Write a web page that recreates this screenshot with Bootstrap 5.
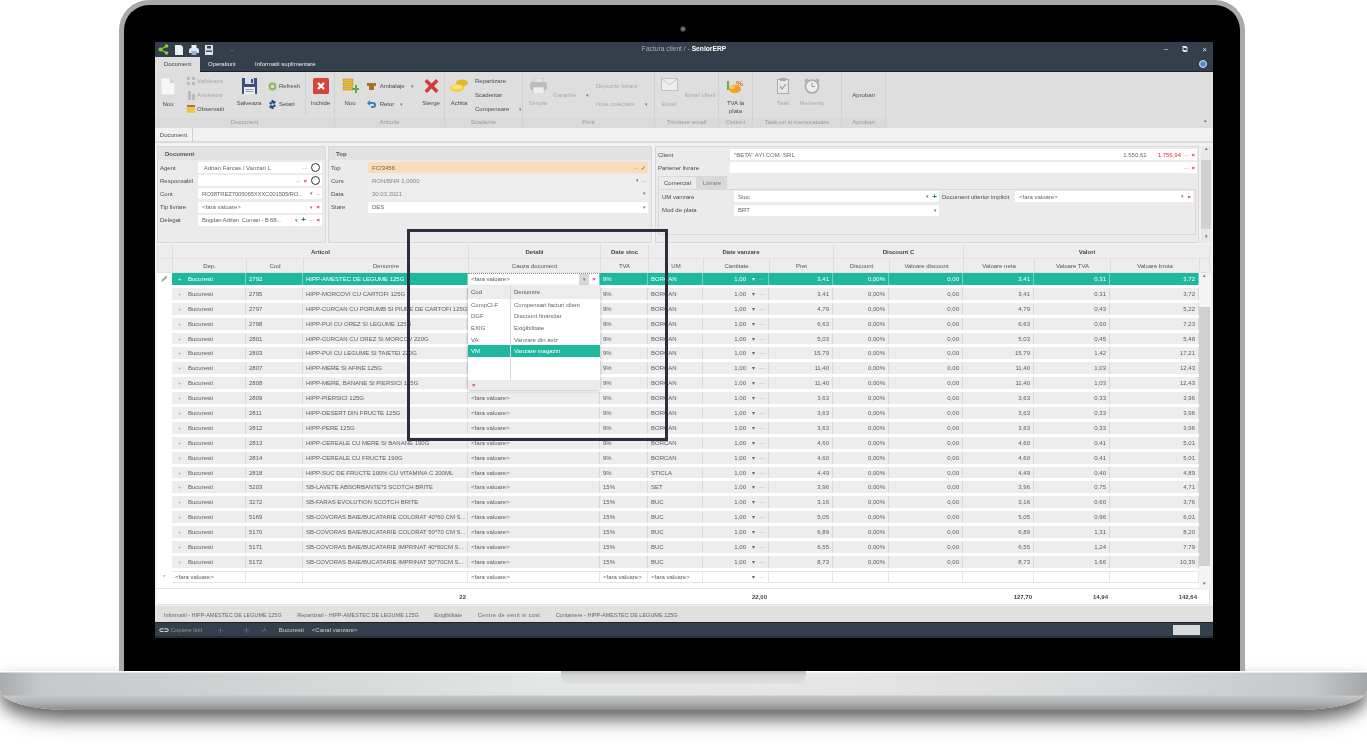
<!DOCTYPE html>
<html lang="ro">
<head>
  <meta charset="UTF-8">
  <title>SeniorERP - Factura client</title>
  <link href="https://cdn.jsdelivr.net/npm/bootstrap@5.3.0/dist/css/bootstrap.min.css" rel="stylesheet">
  <style>
    html, body { height: 753px; overflow: hidden; background: #fff; }
    body { font-family: "Liberation Sans", Arial, sans-serif; font-size: 6px; line-height: 1; color: #4a4a4a; }

    /* laptop */
    .lid { width: 1126px; height: 671px; margin-left: 119px; background: #000; border: solid #a8a9aa; border-width: 5px 5px 0; border-radius: 30px 30px 0 0; padding: 37px 26px 0 31px; position: relative; }
    .cam { width: 6px; height: 6px; border-radius: 50%; background: #6d6f70; border: 1px solid #333; position: absolute; left: 556px; top: 21px; }
    .base { height: 39px; border-radius: 0 0 70px 70px / 0 0 20px 20px; box-shadow: 0 9px 16px 0 rgba(0,0,0,.58), 0 24px 20px -6px rgba(0,0,0,.08);
      background: linear-gradient(#fff 0, #fff 1px, transparent 2px, transparent 24px, #c6c7c8 25px, #b4b5b6 31px, #8b8c8d 39px), linear-gradient(90deg, #a9abac 0, #c6c8c9 3%, #cfd0d1 15%, #e4e5e5 40%, #e6e6e6 60%, #d9dadb 80%, #c5c7c8 96%, #a5a7a8 100%); }
    .notch { width: 245px; height: 15px; border-radius: 0 0 11px 11px; background: linear-gradient(#b9babb, #d5d6d6 30%, #dfe0e0 85%, #f1f1f1); }

    /* window */
    .appwin { width: 1058px; height: 596px; background: #f1f1f1; position: relative; filter: blur(.3px); }
    .titlebar { height: 15px; background: #333f4b; color: #a5adb4; }
    .titlebar svg { display: block; }
    .titletxt { font-size: 6.7px; }
    .qa { gap: 6px; padding-left: 3px; }
    .winbtn { gap: 14px; padding-right: 6px; color: #e3e6e8; font-size: 8px; }
    .tabline { height: 15px; background: #333f4b; color: #eef0f1; border-bottom: 1px solid #1c2329; }
    .maintab { width: 45px; height: 15px; background: #dedfde; color: #444; }
    .tabtxt1 { margin-left: 8px; width: 47px; }
    .helpdot { width: 8px; height: 8px; border-radius: 50%; background: #4d8fd0; border: 1px solid #d5e4f2; margin-right: 6px; }

    /* ribbon */
    .ribbon { height: 56px; background: #dddedd; }
    .rgroup { border-right: 1px solid #d0d1d0; flex: none; }
    .rbody { height: 46px; }
    .rlabel { height: 10px; color: #999; text-align: center; line-height: 8px; background: #d9dad9; }
    .rbig { padding-top: 6px; flex: none; text-align: center; }
    .rbig svg { display: block; margin: 0 auto 6px; }
    .rline2 { padding-top: 2px; }
    .rcol { flex: none; justify-content: center; }
    .rcol > div { height: 14px; gap: 2px; white-space: nowrap; }
    .rcol.spaced { gap: 4px; }
    .off { color: #a9a9a9; }
    .rsep { width: 1px; height: 44px; background: #cfd0cf; flex: none; }
    .w26 { width: 26px; } .w28 { width: 28px; } .w29 { width: 29px; } .w30 { width: 30px; } .w34 { width: 34px; } .w37 { width: 37px; }
    .w43 { width: 43px; } .w48 { width: 48px; } .w50 { width: 50px; } .w57 { width: 57px; }
    .g180 { width: 180px; } .g110 { width: 110px; } .g78 { width: 78px; } .g132 { width: 132px; } .g64 { width: 64px; } .g34 { width: 34px; } .g89 { width: 89px; } .g44 { width: 44px; }
    .gapl6 { margin-left: 6px; } .gapl5 { margin-left: 5px; } .gapl2 { margin-left: 2px; } .gapl15 { margin-left: 15px; }
    .upcaret { margin-left: auto; margin-right: 6px; margin-top: 46px; color: #777; font-size: 5px; }

    /* document strip */
    .docstrip { height: 15px; background: #f1f1f1; border-bottom: 2px solid #dcdcdc; }
    .doctab { width: 38px; height: 14px; border-right: 1px solid #cfcfcf; }

    /* header panels */
    .panels { height: 97px; margin: 3px 3px 0 2px; gap: 2px; }
    .hpanel { background: #ebebeb; border: 1px solid #d8d8d8; flex: none; }
    .pdoc { width: 169px; } .ptop { width: 324px; margin-right: 1px; } .pcli { width: 544px; }
    .phead { height: 13px; background: #e2e2e2; font-weight: bold; padding-left: 7px; color: #555; font-size: 6px; }
    .frow { height: 13.2px; padding: 0 3px 0 2px; }
    .flabel { flex: none; }
    .flabel-d { width: 38px; } .flabel-t { width: 37px; } .flabel-c { width: 72px; }
    .fld { height: 11px; background: #fff; flex: 1 1 0; min-width: 0; padding: 0 2px 0 4px; gap: 3px; color: #666; }
    .fld .val { flex: 1 1 0; min-width: 0; white-space: nowrap; overflow: hidden; }
    .fld .tight { letter-spacing: -.2px; }
    .f-orange { background: #fbddb9; color: #6d5b46; }
    .f-off { background: #ededed; color: #888; }
    .rx { color: #c9284a; font-weight: bold; }
    .gplus { color: #1f8a3b; font-weight: bold; font-size: 8px; }
    .dots { color: #777; letter-spacing: -.5px; }
    .caret { color: #777; font-size: 5px; }
    .chat { width: 9px; height: 9px; border: 1px solid #333; border-radius: 50%; background: #fff; flex: none; margin-left: 1px; }
    .fcontrols { padding-top: 1px; }
    .clitop { padding-top: 1px; }
    .clitop .frow { padding-right: 1px; }
    .clitabs { margin: 2px 2px 0 2px; height: 13px; }
    .ctab { height: 13px; width: 39px; background: #ebebeb; border: 1px solid #d8d8d8; border-bottom: 0; }
    .ctab2 { width: 30px; background: #d9d9d9; color: #777; }
    .cinner { margin: 0 2px; height: 46px; border: 1px solid #d8d8d8; }
    .lab-um { width: 73px; padding-left: 1px; }
    .lab-doc { width: 76px; padding-left: 3px; flex: none; }
    .fum { flex: 0 0 205px; }
    .fdoc { flex: 0 0 178px; margin-left: 0; }
    .vscroll { width: 10px; flex: none; background: #e8e8e8; color: #666; }
    .vthumb { background: #cfd0d0; flex: 1 1 0; margin: 5px 0; }
    .vend { height: 9px; font-size: 5px; }

    /* grid */
    .gridwrap { margin: 2px 3px 0 2px; height: 360px; background: #fff; border: 1px solid #e2e2e2; border-width: 0 1px 1px 0; }
    .glin { display: grid; grid-template-columns: 15px 74px 57px 165px 132px 48px 55px 66px 64px 56px 74px 71px 76px 89px 11px; }
    .ghead { height: 14px; background: #ededed; border-bottom: 1px solid #e2e2e2; }
    .ghead > div { display: flex; align-items: center; justify-content: center; border-left: 1px solid #dcdcdc; color: #555; }
    .ghead.top > div { font-weight: bold; color: #444; }
    .s3 { grid-column: span 3; } .s2 { grid-column: span 2; } .s4 { grid-column: span 4; }
    .grow { height: 14.9px; border-bottom: 3px solid #fff; background: #ededed; }
    .grow > div { display: flex; align-items: center; padding: 0 3px; border-right: 1px solid #d9d9d9; white-space: nowrap; overflow: hidden; color: #5c5c5c; min-width: 0; }
    .grow > .ci { background: #fff; border-right: 0; justify-content: center; color: #888; }
    .grow > .cs { background: #fff; border-right: 0; }
    .grow > .ce { justify-content: flex-end; }
    .grow .plus { color: #aaa; width: 13px; flex: none; padding-left: 3px; }
    .grow .ctrl { margin-left: 6px; gap: 4px; color: #666; }
    .grow.sel { background: #1eb89f; }
    .grow.sel > div { color: #fff; border-right-color: #6fd3c2; }
    .grow.sel > .ci, .grow.sel > .cs { color: #888; }
    .grow.sel .plus, .grow.sel .ctrl { color: #d8f3ee; }
    .grow.sel > .cedit { background: #fff; color: #555; border-top: 1px dotted #888; padding-right: 0; }
    .cbtn { width: 10px; height: 12px; background: #d8d8d8; color: #777; flex: none; font-size: 5px; }
    .cx { width: 10px; flex: none; text-align: center; }
    .grow.newl { background: #fff; }
    .grow.newl > div { border: 1px solid #e6e6e6; border-width: 1px 1px 1px 0; }
    .grow.newl > .ci, .grow.newl > .cs { border: 0; }
    .gfoot { height: 16px; margin-top: 2.5px; border-top: 1px solid #e6e6e6; background: #fff; }
    .gfoot > div { display: flex; align-items: center; justify-content: flex-end; padding-right: 2px; font-weight: bold; color: #444; }

    .gscroll { position: absolute; left: 1044px; top: 231px; height: 317px; width: 11px; background: #f4f4f4; color: #666; }
    .gscroll .vthumb { margin: 25px 0 15px; }

    /* drop-down list over the grid */
    .ddlist { position: absolute; left: 313px; top: 243px; width: 132px; height: 105px; background: #fff; box-shadow: 0 1px 3px rgba(0,0,0,.25); }
    .ddhead { height: 14px; background: #ececec; color: #555; }
    .ddlin { display: grid; grid-template-columns: 43px 89px; }
    .ddlin > div { padding-left: 3px; display: flex; align-items: center; white-space: nowrap; }
    .ddlin > div:first-child { border-right: 1px solid #d9d9d9; }
    .ddhead > div { height: 14px; }
    .ddit { height: 11.6px; color: #666; }
    .ddit.on { background: #1eb89f; color: #fff; }
    .ddfill { height: 23px; }
    .ddfoot { height: 10px; background: #ebebeb; padding-left: 4px; }
    .focusbox { position: absolute; left: 252px; top: 187px; width: 261px; height: 212px; border: 3px solid #2a2f3b; pointer-events: none; }

    /* bottom */
    .btabs { height: 16px; background: #dfe0df; padding: 7px 0 0 9px; color: #666; gap: 15.5px; margin-top: 1px; font-size: 5.5px; }
    .btab-wide { letter-spacing: .35px; }
    .statusbar { height: 14px; background: #333f4b; color: #ccd1d5; border-top: 1px solid #1c2329; }
    .statusbar .dim { color: #8b949b; }
    .stbox { width: 27px; height: 10px; background: #dadada; margin-right: 13px; }
    .endbar { height: 2px; background: #262f38; }
  </style>
</head>
<body>
  <div class="lid">
    <div class="cam"></div>
    <div class="appwin d-flex flex-column">

      <div class="titlebar d-flex align-items-center flex-none">
        <div class="flex-fill d-flex align-items-center qa w-25">
          <svg width="11" height="11" viewBox="0 0 11 11"><path d="M2.5 5.5 8.5 2M2.5 5.5 8.5 9" stroke="#8fc93a" stroke-width="1.4" fill="none"/><circle cx="2.5" cy="5.5" r="2" fill="#8fc93a"/><circle cx="8.5" cy="2" r="1.8" fill="#8fc93a"/><circle cx="8.5" cy="9" r="1.8" fill="#8fc93a"/></svg>
          <svg width="8" height="10" viewBox="0 0 8 10"><path d="M0 0h6l2 2v8H0z" fill="#eef1f4"/></svg>
          <svg width="10" height="10" viewBox="0 0 10 10"><rect x="2.5" y="0" width="5" height="4" fill="#eef1f4"/><path d="M0 5a2 2 0 0 1 2-2h6a2 2 0 0 1 2 2v3H0z" fill="#dfe5ea"/><rect x="2.5" y="6" width="5" height="4" fill="#8db4d8"/></svg>
          <svg width="8" height="10" viewBox="0 0 8 10"><path d="M0 0h8v10H0z" fill="#dfe3e7"/><rect x="2" y="1" width="4" height="2.5" fill="#39444f"/><rect x="1" y="5.5" width="6" height="1.4" fill="#39444f"/></svg>
          <span class="ms-2 ps-1">-</span>
        </div>
        <div class="text-nowrap titletxt">Factura client / - <b class="text-white">SeniorERP</b></div>
        <div class="flex-fill d-flex justify-content-end align-items-center winbtn w-25">
          <span>&#8722;</span><span>&#10697;</span><span>&#215;</span>
        </div>
      </div>

      <div class="tabline d-flex align-items-center">
        <div class="maintab d-flex align-items-center justify-content-center">Document</div>
        <div class="tabtxt1">Operatiuni</div>
        <div>Informatii suplimentare</div>
        <div class="helpdot ms-auto"></div>
      </div>

      <div class="ribbon d-flex">
        <div class="rgroup g180">
          <div class="rbody d-flex">
            <div class="rbig w26"><svg width="14" height="17" viewBox="0 0 14 17"><path d="M0 0h9l5 5v12H0z" fill="#f7f7f7" stroke="#cfcfcf" stroke-width=".6"/><path d="M9 0v5h5z" fill="#c7d6e6"/></svg>Nou</div>
            <div class="rcol gapl6 w48 d-flex flex-column">
              <div class="d-flex align-items-center off"><svg width="8" height="8" viewBox="0 0 8 8"><path d="M0 0h3v3H0zM5 0h3v3H5zM0 5h3v3H0zM5 5h3v3H5z" fill="#bbb"/></svg>Valideaza</div>
              <div class="d-flex align-items-center off"><svg width="8" height="9" viewBox="0 0 8 9"><path d="M1 0h3v9H1zM5 3h3v6H5z" fill="#bbb"/></svg>Anuleaza</div>
              <div class="d-flex align-items-center"><svg width="8" height="8" viewBox="0 0 8 8"><path d="M0 0h8v8H0z" fill="#f2c14e"/><path d="M0 0h8v2H0z" fill="#b5762a"/></svg>Observatii</div>
            </div>
            <div class="rbig w28"><svg width="15" height="16" viewBox="0 0 15 16"><path d="M0 0h15v16H0z" fill="#3b4f7d"/><path d="M3 0h9v6H3z" fill="#d9dfe9"/><path d="M9 1h2v4H9z" fill="#3b4f7d"/><path d="M2 9h11v7H2z" fill="#f2f2f2"/><path d="M3.5 11h8v1h-8zM3.5 13h8v1h-8z" fill="#8e9ab3"/></svg>Salveaza</div>
            <div class="rcol gapl5 w37 d-flex flex-column spaced">
              <div class="d-flex align-items-center"><svg width="9" height="9" viewBox="0 0 9 9"><circle cx="4.5" cy="4.5" r="4" fill="#8fb96b"/><circle cx="4.5" cy="4.5" r="1.8" fill="#e6e39a"/></svg>Refresh</div>
              <div class="d-flex align-items-center"><svg width="9" height="9" viewBox="0 0 9 9"><path d="M3.5 0h2v1.5l1.4-.8 1 1.7-1.4.9v1.4l1.4.9-1 1.7-1.4-.8V9h-2V7.500l-1.400.8-1-1.700 1.400-.9V4.300L1.100 3.400l1-1.700 1.400.8z" fill="#17458f"/><circle cx="4.500" cy="4.500" r="1.200" fill="#dddedd"/></svg>Setari</div>
            </div>
            <div class="rsep"></div>
            <div class="rbig w29"><svg width="16" height="16" viewBox="0 0 16 16"><rect width="16" height="16" rx="1.500" fill="#d8433b"/><path d="M5 5l6 6M11 5l-6 6" stroke="#fff" stroke-width="2.200"/></svg>Inchide</div>
          </div>
          <div class="rlabel">Document</div>
        </div>

        <div class="rgroup g110">
          <div class="rbody d-flex">
            <div class="rbig w30"><svg width="17" height="16" viewBox="0 0 17 16"><path d="M1 1h10v3H1zM1 5h10v3H1zM1 9h10v3H1z" fill="#e8b92f" stroke="#b78a1c" stroke-width=".5"/><path d="M10 10h3V7h2v3h2v2h-2v3h-2v-3h-3z" fill="#65a844"/></svg>Nou</div>
            <div class="rcol w50 d-flex flex-column spaced gapl2">
              <div class="d-flex align-items-center"><svg width="9" height="8" viewBox="0 0 9 8"><path d="M0 1h9v3H7v4H2V4H0z" fill="#a9702d"/></svg>&nbsp;Ambalaje <span class="caret ms-1">&#9662;</span></div>
              <div class="d-flex align-items-center"><svg width="9" height="8" viewBox="0 0 9 8"><path d="M3 0v2h3a3 3 0 0 1 0 6H4V6h2a1 1 0 0 0 0-2H3v2L0 3z" fill="#3b7fc4"/></svg>&nbsp;Retur <span class="caret ms-1">&#9662;</span></div>
            </div>
            <div class="rbig w28"><svg width="15" height="16" viewBox="0 0 15 16"><path d="M3 1 7.500 5.500 12 1l2.500 2.500L10 8l4.500 4.500L12 15 7.500 10.500 3 15 .5 12.500 5 8 .5 3.500z" fill="#d33c34"/></svg>Sterge</div>
          </div>
          <div class="rlabel">Articole</div>
        </div>

        <div class="rgroup g78">
          <div class="rbody d-flex">
            <div class="rbig w28"><svg width="18" height="16" viewBox="0 0 18 16"><ellipse cx="12" cy="5" rx="6" ry="3.500" fill="#e3b928"/><ellipse cx="7" cy="10" rx="7" ry="4" fill="#f0cf3b"/><ellipse cx="7" cy="9" rx="5" ry="2.500" fill="#f9e27a"/></svg>Achita</div>
            <div class="rcol gapl2 w48 d-flex flex-column">
              <div class="d-flex align-items-center">Repartizare</div>
              <div class="d-flex align-items-center">Scadentar</div>
              <div class="d-flex align-items-center">Compensare <span class="caret ms-2">&#9662;</span></div>
            </div>
          </div>
          <div class="rlabel">Scadente</div>
        </div>

        <div class="rgroup g132">
          <div class="rbody d-flex">
            <div class="rbig w30 off"><svg width="17" height="16" viewBox="0 0 17 16"><rect x="4" y="0" width="9" height="5" fill="#e3e3e3" stroke="#b4b4b4" stroke-width=".5"/><rect y="4" width="17" height="8" rx="2" fill="#bdbdbd"/><rect x="3" y="9" width="11" height="7" fill="#eee" stroke="#b4b4b4" stroke-width=".5"/></svg>Simpla</div>
            <div class="rcol w43 d-flex flex-column off">
              <div class="d-flex align-items-center">Garantie <span class="caret ms-2">&#9662;</span></div>
            </div>
            <div class="rcol w57 d-flex flex-column spaced off">
              <div class="d-flex align-items-center">Depozite livrare</div>
              <div class="d-flex align-items-center">Note colectare <span class="caret ms-2">&#9662;</span></div>
            </div>
          </div>
          <div class="rlabel">Print</div>
        </div>

        <div class="rgroup g64">
          <div class="rbody d-flex">
            <div class="rbig w28 off"><svg width="17" height="13" viewBox="0 0 17 13"><rect x=".5" y=".5" width="16" height="12" fill="#eee" stroke="#c2c2c2"/><path d="M.5.5 8.500 7 16.500.5" fill="none" stroke="#c2c2c2"/></svg><div class="pt-1">Email</div></div>
            <div class="rcol gapl2 d-flex flex-column off">
              <div class="d-flex align-items-center">Email client</div>
            </div>
          </div>
          <div class="rlabel">Trimitere email</div>
        </div>

        <div class="rgroup g34">
          <div class="rbody d-flex">
            <div class="rbig w-100"><svg width="19" height="16" viewBox="0 0 19 16"><ellipse cx="9" cy="11" rx="6" ry="4" fill="#f1a01f"/><ellipse cx="6" cy="9" rx="3" ry="2" fill="#f9c74f"/><path d="M1 3h2v9H1z" fill="#66b04a"/><text x="10" y="8" font-size="8" font-weight="bold" fill="#e8691c">%</text></svg>TVA la<div class="rline2">plata</div></div>
          </div>
          <div class="rlabel">Optiuni</div>
        </div>

        <div class="rgroup g89">
          <div class="rbody d-flex">
            <div class="rbig w30 gapl15 off"><svg width="12" height="16" viewBox="0 0 12 16"><rect x=".5" y="1.500" width="11" height="14" fill="#e8e8e8" stroke="#aaa"/><rect x="3" y="0" width="6" height="3" fill="#aaa"/><path d="M3 8l2 3 4-5" fill="none" stroke="#999" stroke-width="1.200"/></svg>Task</div>
            <div class="rbig w28 off"><svg width="16" height="16" viewBox="0 0 16 16"><circle cx="8" cy="8.500" r="6.500" fill="#eee" stroke="#a5a5a5" stroke-width="1.500"/><path d="M8 4.500v4h3" fill="none" stroke="#999"/><circle cx="2.500" cy="2.500" r="2" fill="#b5b5b5"/><circle cx="13.500" cy="2.500" r="2" fill="#b5b5b5"/></svg>Memento</div>
          </div>
          <div class="rlabel">Task-uri si memoratoare</div>
        </div>

        <div class="rgroup g44">
          <div class="rbody d-flex align-items-center justify-content-center">Aprobari</div>
          <div class="rlabel">Aprobari</div>
        </div>
        <div class="upcaret">&#9652;</div>
      </div>

      <div class="docstrip d-flex"><div class="doctab d-flex align-items-center justify-content-center">Document</div></div>

      <div class="panels d-flex">
        <div class="hpanel pdoc">
          <div class="phead d-flex align-items-center">Document</div>
          <div class="fcontrols">
            <div class="frow d-flex align-items-center"><div class="flabel flabel-d">Agent</div><div class="fld d-flex align-items-center"><span class="val">&nbsp;Adrian Farcas / Vanzari L</span><span class="dots">···</span><span class="chat"></span></div></div>
            <div class="frow d-flex align-items-center"><div class="flabel flabel-d">Responsabil</div><div class="fld d-flex align-items-center"><span class="val"></span><span class="dots">···</span><span class="rx">&#215;</span><span class="chat"></span></div></div>
            <div class="frow d-flex align-items-center"><div class="flabel flabel-d">Cont</div><div class="fld d-flex align-items-center"><span class="val tight">RO38TREZ7005065XXXC001505/RO..</span><span class="caret">&#9662;</span><span class="dots">···</span></div></div>
            <div class="frow d-flex align-items-center"><div class="flabel flabel-d">Tip livrare</div><div class="fld d-flex align-items-center"><span class="val">&lt;fara valoare&gt;</span><span class="caret">&#9662;</span><span class="rx">&#215;</span></div></div>
            <div class="frow d-flex align-items-center"><div class="flabel flabel-d">Delegat</div><div class="fld d-flex align-items-center"><span class="val tight">Bogdan Adrian&nbsp; Coman - B 68...</span><span class="caret">&#9662;</span><span class="gplus">+</span><span class="dots">···</span><span class="rx">&#215;</span></div></div>
          </div>
        </div>

        <div class="hpanel ptop">
          <div class="phead d-flex align-items-center">Top</div>
          <div class="fcontrols">
            <div class="frow d-flex align-items-center"><div class="flabel flabel-t">Top</div><div class="fld f-orange d-flex align-items-center"><span class="val">FC/3456</span><span class="dots">···</span><span>&#10003;</span></div></div>
            <div class="frow d-flex align-items-center"><div class="flabel flabel-t">Curs</div><div class="fld f-off d-flex align-items-center"><span class="val">RON/BNR 1,0000</span><span class="caret">&#9662;</span><span class="dots">···</span></div></div>
            <div class="frow d-flex align-items-center"><div class="flabel flabel-t">Data</div><div class="fld f-off d-flex align-items-center"><span class="val">30.03.2021</span><span class="caret">&#9662;</span></div></div>
            <div class="frow d-flex align-items-center"><div class="flabel flabel-t">Stare</div><div class="fld d-flex align-items-center"><span class="val">DES</span><span class="caret">&#9662;</span></div></div>
          </div>
        </div>

        <div class="hpanel pcli">
          <div class="clitop">
            <div class="frow d-flex align-items-center"><div class="flabel flabel-c">Client</div><div class="fld d-flex align-items-center"><span class="val">"BETA" AYI COM. SRL</span><span>1.550,61</span><span class="text-danger ms-2">1.756,94</span><span class="dots">···</span><span class="rx">&#215;</span></div></div>
            <div class="frow d-flex align-items-center"><div class="flabel flabel-c">Partener livrare</div><div class="fld d-flex align-items-center"><span class="val"></span><span class="dots">···</span><span class="rx">&#215;</span></div></div>
          </div>
          <div class="clitabs d-flex">
            <div class="ctab d-flex align-items-center justify-content-center">Comercial</div>
            <div class="ctab ctab2 d-flex align-items-center justify-content-center">Livrare</div>
          </div>
          <div class="cinner">
            <div class="frow d-flex align-items-center"><div class="flabel lab-um">UM vanzare</div><div class="fld fum d-flex align-items-center"><span class="val">Stoc</span><span class="caret">&#9662;</span><span class="gplus">+</span></div><div class="flabel lab-doc">Document ulterior implicit</div><div class="fld fdoc d-flex align-items-center"><span class="val">&lt;fara valoare&gt;</span><span class="caret">&#9662;</span><span class="rx">&#215;</span></div></div>
            <div class="frow d-flex align-items-center"><div class="flabel lab-um">Mod de plata</div><div class="fld fum d-flex align-items-center"><span class="val">BRT</span><span class="caret">&#9662;</span></div></div>
          </div>
        </div>

        <div class="vscroll d-flex flex-column text-center">
          <div class="vend">&#9652;</div><div class="vthumb"></div><div class="vend">&#9662;</div>
        </div>
      </div>

      <div class="gridwrap">
        <div class="glin ghead top">
          <div></div><div class="s3">Articol</div><div>Detalii</div><div>Date stoc</div><div class="s3">Date vanzare</div><div class="s2">Discount C</div><div class="s4">Valori</div>
        </div>
        <div class="glin ghead">
          <div></div><div>Dep.</div><div>Cod</div><div>Denumire</div><div>Cauza document</div><div>TVA</div><div>UM</div><div>Cantitate</div><div>Pret</div><div>Discount</div><div>Valoare discount</div><div>Valoare neta</div><div>Valoare TVA</div><div>Valoare bruta</div><div></div>
        </div>
        <div id="gridRows"></div>
        <div class="glin gfoot">
          <div></div><div></div><div></div><div>22</div><div></div><div></div><div></div><div>22,00</div><div></div><div></div><div></div><div>127,70</div><div>14,94</div><div>142,64</div><div></div>
        </div>
      </div>

      <div class="btabs d-flex">
        <div>Informatii - HIPP-AMESTEC DE LEGUME 125G</div>
        <div>Repartizari - HIPP-AMESTEC DE LEGUME 125G</div>
        <div>Exigibilitate</div>
        <div class="btab-wide">Centre de venit si cost</div>
        <div>Containere - HIPP-AMESTEC DE LEGUME 125G</div>
      </div>

      <div class="statusbar d-flex align-items-center">
        <div class="d-flex align-items-center ms-1 dim"><b class="text-white">&#8834;&#8835;</b>&nbsp;Copiere linii</div>
        <div class="dim ms-3">-|-</div>
        <div class="dim ms-3 ps-1">-|-</div>
        <div class="dim ms-2 ps-1">-/-</div>
        <div class="ms-2 ps-1">Bucuresti</div>
        <div class="ms-2">&lt;Canal vanzare&gt;</div>
        <div class="stbox ms-auto"></div>
      </div>
      <div class="endbar"></div>

      <div class="gscroll d-flex flex-column text-center">
        <div class="vend">&#9652;</div>
        <div class="d-flex flex-column flex-fill"><div class="vthumb"></div></div>
        <div class="vend">&#9662;</div>
      </div>

      <div class="ddlist">
        <div class="ddlin ddhead"><div>Cod</div><div>Denumire</div></div>
        <div class="ddlin ddit"><div>CompCl-F</div><div>Compensari facturi client</div></div>
        <div class="ddlin ddit"><div>DGF</div><div>Discount financiar</div></div>
        <div class="ddlin ddit"><div>EXIG</div><div>Exigibilitate</div></div>
        <div class="ddlin ddit"><div>VA</div><div>Vanzare din aviz</div></div>
        <div class="ddlin ddit on"><div>VM</div><div>Vanzare magazin</div></div>
        <div class="ddlin ddfill"><div></div><div></div></div>
        <div class="ddfoot d-flex align-items-center"><span class="rx">&#215;</span></div>
      </div>

      <div class="focusbox"></div>
    </div>
  </div>
  <div class="base d-flex justify-content-center"><div class="notch"></div></div>

  <script>
    // cod, denumire, tva, um, pret, tva val, bruta
    const rows = [
      ['2792', 'HIPP-AMESTEC DE LEGUME 125G', '9%', 'BORCAN', '3,41', '0,31', '3,72'],
      ['2795', 'HIPP-MORCOVI CU CARTOFI 125G', '9%', 'BORCAN', '3,41', '0,31', '3,72'],
      ['2797', 'HIPP-CURCAN CU PORUMB SI PIURE DE CARTOFI 125G', '9%', 'BORCAN', '4,79', '0,43', '5,22'],
      ['2798', 'HIPP-PUI CU OREZ SI LEGUME 125G', '9%', 'BORCAN', '6,63', '0,60', '7,23'],
      ['2801', 'HIPP-CURCAN CU OREZ SI MORCOV 220G', '9%', 'BORCAN', '5,03', '0,45', '5,48'],
      ['2803', 'HIPP-PUI CU LEGUME SI TAIETEI 220G', '9%', 'BORCAN', '15,79', '1,42', '17,21'],
      ['2807', 'HIPP-MERE SI AFINE 125G', '9%', 'BORCAN', '11,40', '1,03', '12,43'],
      ['2808', 'HIPP-MERE, BANANE SI PIERSICI 125G', '9%', 'BORCAN', '11,40', '1,03', '12,43'],
      ['2809', 'HIPP-PIERSICI 125G', '9%', 'BORCAN', '3,63', '0,33', '3,96'],
      ['2811', 'HIPP-DESERT DIN FRUCTE 125G', '9%', 'BORCAN', '3,63', '0,33', '3,96'],
      ['2812', 'HIPP-PERE 125G', '9%', 'BORCAN', '3,63', '0,33', '3,96'],
      ['2813', 'HIPP-CEREALE CU MERE SI BANANE 190G', '9%', 'BORCAN', '4,60', '0,41', '5,01'],
      ['2814', 'HIPP-CEREALE CU FRUCTE 190G', '9%', 'BORCAN', '4,60', '0,41', '5,01'],
      ['2818', 'HIPP-SUC DE FRUCTE 100% CU VITAMINA C 200ML', '9%', 'STICLA', '4,49', '0,40', '4,89'],
      ['5203', 'SB-LAVETE ABSORBANTE*3 SCOTCH BRITE', '15%', 'SET', '3,96', '0,75', '4,71'],
      ['3272', 'SB-FARAS EVOLUTION SCOTCH BRITE', '15%', 'BUC', '3,16', '0,60', '3,76'],
      ['5169', 'SB-COVORAS BAIE/BUCATARIE COLORAT 40*60 CM S...', '15%', 'BUC', '5,05', '0,96', '6,01'],
      ['5170', 'SB-COVORAS BAIE/BUCATARIE COLORAT 50*70 CM S...', '15%', 'BUC', '6,89', '1,31', '8,20'],
      ['5171', 'SB-COVORAS BAIE/BUCATARIE IMPRINAT 40*60CM S...', '15%', 'BUC', '6,55', '1,24', '7,79'],
      ['5172', 'SB-COVORAS BAIE/BUCATARIE IMPRINAT 50*70CM S...', '15%', 'BUC', '8,73', '1,66', '10,39']
    ];

    const gridRows = document.getElementById('gridRows');
    let html = '';
    rows.forEach((r, i) => {
      const sel = i === 0;
      const pen = sel ? '<svg width="7" height="7" viewBox="0 0 7 7"><path d="M0 7l1-2.500L5 .5 6.500 2 2.500 6z" fill="#aaa"/></svg>' : '';
      // rows 1-7 sit under the open drop-down, nothing shows there
      let cauza = i < 8 ? '<div></div>' : '<div>&lt;fara valoare&gt;</div>';
      if (sel) cauza = '<div class="cedit"><span class="flex-fill">&lt;fara valoare&gt;</span><span class="cbtn d-flex align-items-center justify-content-center">&#9662;</span><span class="cx rx">&#215;</span></div>';
      const den = i === 2 ? 'HIPP-CURCAN CU PORUMB SI PIURE DE CARTOFI 125G' : r[1];
      html += `<div class="glin grow${sel ? ' sel' : ''}">
        <div class="ci">${pen}</div>
        <div><span class="plus">+</span>Bucuresti</div>
        <div>${r[0]}</div><div>${den}</div>${cauza}
        <div>${r[2]}</div><div>${r[3]}</div>
        <div class="ce">1,00<span class="ctrl d-flex"><span>&#9662;</span><span>···</span></span></div>
        <div class="ce">${r[4]}</div><div class="ce">0,00%</div><div class="ce">0,00</div>
        <div class="ce">${r[4]}</div><div class="ce">${r[5]}</div><div class="ce">${r[6]}</div>
        <div class="cs"></div></div>`;
    });
    html += `<div class="glin grow newl">
      <div class="ci">*</div><div>&lt;fara valoare&gt;</div><div></div><div></div><div>&lt;fara valoare&gt;</div>
      <div>&lt;fara valoare&gt;</div><div>&lt;fara valoare&gt;</div>
      <div class="ce"><span class="ctrl d-flex"><span>&#9662;</span><span>···</span></span></div>
      <div></div><div></div><div></div><div></div><div></div><div></div><div class="cs"></div></div>`;
    gridRows.innerHTML = html;
  </script>
  <script src="https://cdn.jsdelivr.net/npm/bootstrap@5.3.0/dist/js/bootstrap.bundle.min.js"></script>
</body>
</html>
